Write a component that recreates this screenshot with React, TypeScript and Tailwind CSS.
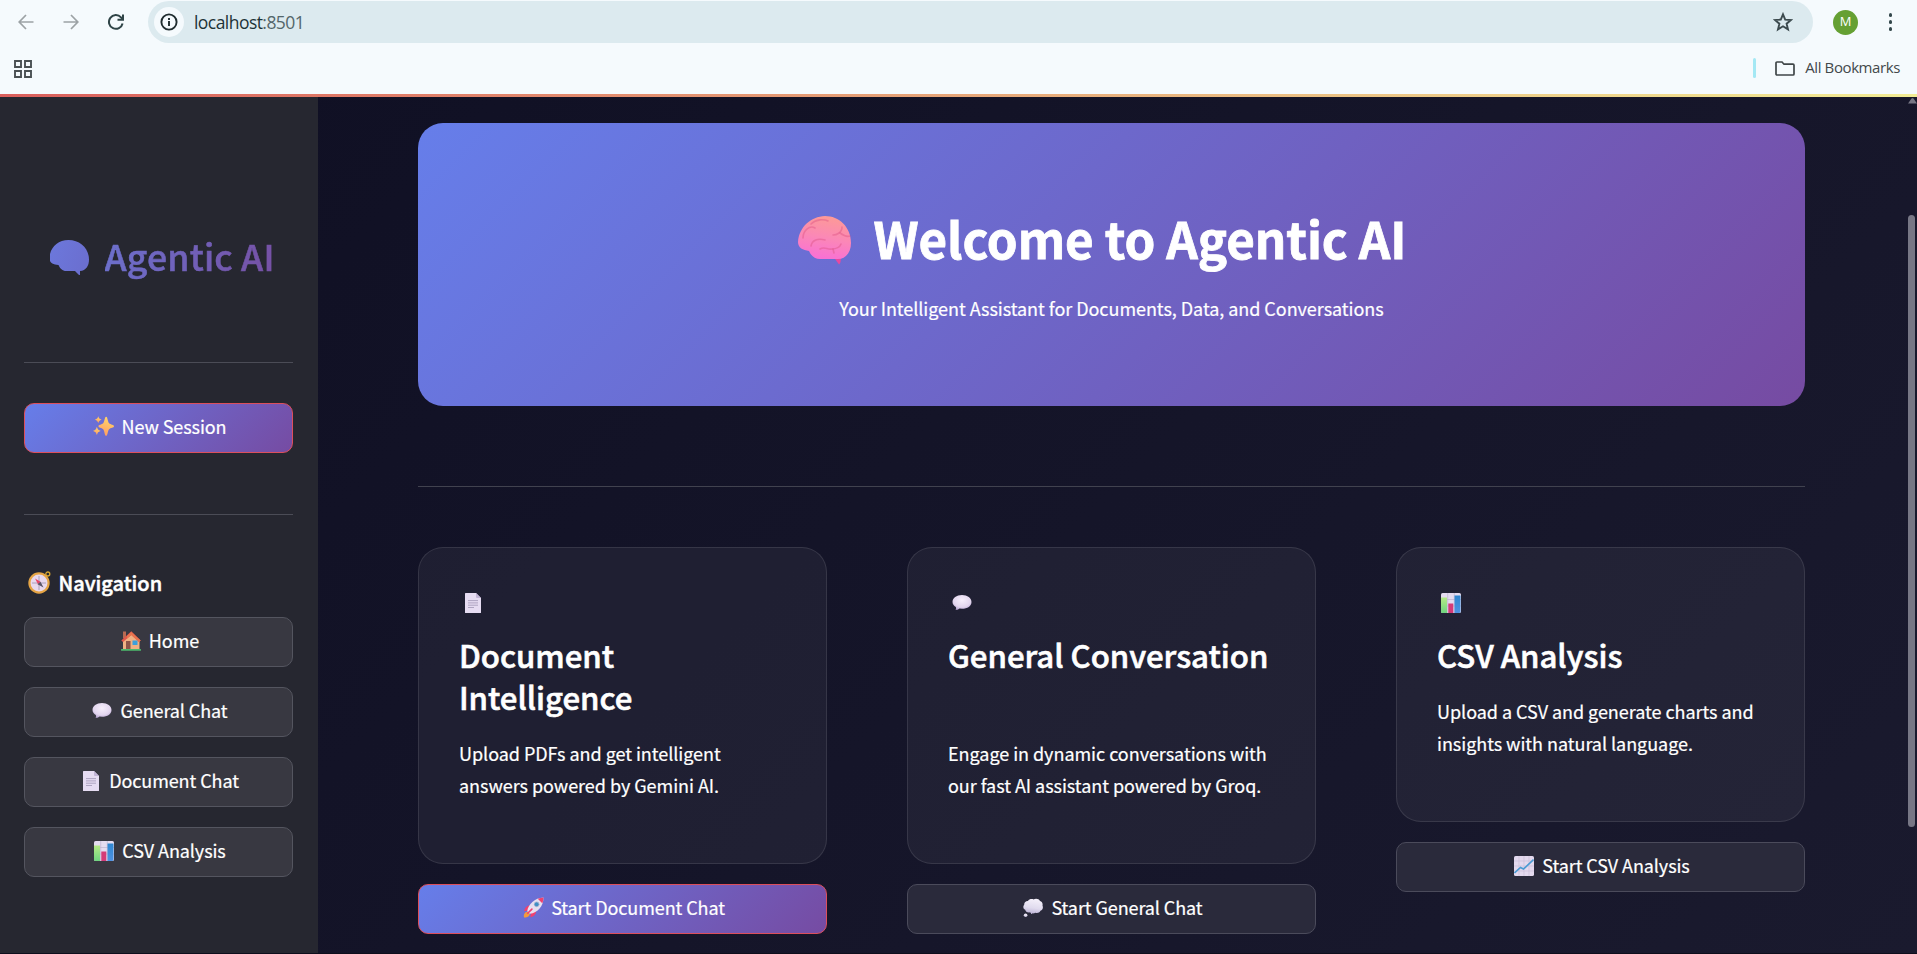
import type { ReactNode } from "react";

const sans = "font-['Noto_Sans_CJK_SC',sans-serif]";
const ui = "font-['Open_Sans',sans-serif]";

type IconProps = { className?: string };

function Brain({ className }: IconProps) {
  return (
    <svg viewBox="0 0 54 49" className={className}>
      <defs>
        <linearGradient id="brainFill" x1="0.6" y1="0" x2="0.4" y2="1">
          <stop offset="0" stopColor="#fd9a96" />
          <stop offset="0.5" stopColor="#fb88b6" />
          <stop offset="1" stopColor="#f96fd6" />
        </linearGradient>
      </defs>
      <path d="M35 40 L41 48.5 C43 47 43 43 42.500 39Z" fill="#e8499f" />
      <path
        d="M27 0 C41 0 53 11 53 27 C53 36 48 43 40 43 H22 C17 43 13 40 11 35 C5 34 0 32 0 26 C1 11 13 0.500 27 0Z"
        fill="url(#brainFill)"
      />
      <g fill="none" stroke="#dd5585" strokeOpacity="0.45" strokeWidth="1.600" strokeLinecap="round">
        <path d="M5 22 C5 14 12 9 17 12" />
        <path d="M13 8 C18 3 26 3 30 5" />
        <path d="M13 30 C14 24 20 22 27 24" />
        <path d="M22 33 C27 30 29 34 34 33 C38 33 42 31 43 28" />
        <path d="M44 11 C44 17 38 19 35 19" />
        <path d="M42 17 C46 20 49 21 52 20" />
        <path d="M35 33 L36 37" />
      </g>
    </svg>
  );
}

function BrainShape({ className }: IconProps) {
  return (
    <svg viewBox="0 0 39 35" className={className}>
      <defs>
        <linearGradient id="brainLogo" x1="0" y1="0" x2="1" y2="0.3">
          <stop offset="0" stopColor="#6c78dc" />
          <stop offset="1" stopColor="#6b6fd0" />
        </linearGradient>
      </defs>
      <path
        d="M18.500 0 C30 0 39 8.500 39 19.500 C39 26 36 30.500 30 31 V34.500 C30 35.400 29 35.200 28.500 34.500 L25 31 H16 C12.500 31 10 28.500 8.500 25 C3.500 24.500 0 22.800 0 20.500 V14 C2 6 9 0 18.500 0Z"
        fill="url(#brainLogo)"
      />
    </svg>
  );
}

function PageIcon() {
  return (
    <svg viewBox="0 0 20 20" className="size-5">
      <path d="M2 0.500 Q2 0 2.500 0 H13 L18 5 V19.500 Q18 20 17.500 20 H2.500 Q2 20 2 19.500Z" fill="#e6dcf2" />
      <path d="M13 0 L18 5 H14 Q13 5 13 4Z" fill="#c2b4d6" />
      <path d="M5 7.600h10M5 9.900h10M5 12.200h10M5 14.500h6" stroke="#a79dbb" strokeWidth="0.9" />
    </svg>
  );
}

function SpeechIcon() {
  return (
    <svg viewBox="0 0 20 20" className="size-5">
      <defs>
        <radialGradient id="speech" cx="0.5" cy="0.35" r="0.65">
          <stop offset="0" stopColor="#f7effc" />
          <stop offset="0.7" stopColor="#e2d5ee" />
          <stop offset="1" stopColor="#b9a6d3" />
        </radialGradient>
      </defs>
      <path
        d="M10 2 C15.500 2 19.500 5 19.500 9 C19.500 13 15.500 15.800 10 15.800 L7.500 15.600 C6 16.800 5 17 3.500 17 C4.300 16 4.200 15 3.800 13.900 C1.800 12.800 0.500 11 0.500 9 C0.500 5 4.500 2 10 2Z"
        fill="url(#speech)"
      />
    </svg>
  );
}

function ThoughtIcon() {
  return (
    <svg viewBox="0 0 20 20" className="size-5">
      <defs>
        <linearGradient id="thought" x1="0.5" y1="0" x2="0.3" y2="1">
          <stop offset="0" stopColor="#f4f0fa" />
          <stop offset="0.6" stopColor="#e0dbee" />
          <stop offset="1" stopColor="#bdb3d6" />
        </linearGradient>
      </defs>
      <g fill="url(#thought)">
        <path d="M5 3 C6 1 9 0.500 10.500 1.500 C13 0 16 1 17 3 C19 3.500 20 5.500 19.500 7.500 C20.500 10 19.500 12 17.500 12.800 C16.500 15 14 15.500 12.500 14.700 C10.500 16 8 15.600 7 14.300 C4.500 15 2.500 13.500 2.200 11.700 C0 10.800 -0.200 8 1.200 6.800 C1 4.500 3 2.800 5 3Z" />
        <circle cx="2.600" cy="17.200" r="1.800" />
      </g>
    </svg>
  );
}

function BarsIcon() {
  return (
    <svg viewBox="0 0 20 20" className="size-5">
      <defs>
        <linearGradient id="barGreen" x1="0" y1="0" x2="0" y2="1">
          <stop offset="0" stopColor="#b6ea86" />
          <stop offset="1" stopColor="#6fd480" />
        </linearGradient>
        <linearGradient id="barBlue" x1="0" y1="0" x2="0" y2="1">
          <stop offset="0" stopColor="#2e87d0" />
          <stop offset="1" stopColor="#4f92e2" />
        </linearGradient>
      </defs>
      <rect width="20" height="20" rx="1.600" fill="#e5dcf0" />
      <path d="M0 6.500h20M0 13h20M6.700 0v20M13.300 0v20" stroke="#bfb3cf" strokeWidth="0.7" />
      <path d="M0 4.500H6V20H1.600Q0 20 0 18.400Z" fill="url(#barGreen)" />
      <rect x="7.300" y="10.500" width="5" height="9.500" fill="#d53a78" />
      <path d="M13.500 2.500H19.500V18.400Q19.500 20 18 20H13.500Z" fill="url(#barBlue)" />
    </svg>
  );
}

function TrendIcon() {
  return (
    <svg viewBox="0 0 20 20" className="size-5">
      <rect width="20" height="20" rx="1.600" fill="#e3d9ee" />
      <path d="M0 5h20M0 10h20M0 15h20M5 0v20M10 0v20M15 0v20" stroke="#cabfd8" strokeWidth="0.7" />
      <path d="M0.500 17 L6.500 11.500 L9.500 13 L19.500 3.500" fill="none" stroke="#4a9bd3" strokeWidth="1.600" />
    </svg>
  );
}

function RocketIcon() {
  return (
    <svg viewBox="0 0 20 20" className="size-[21px]">
      <path d="M1 19.500 C0 17 2 13.500 4.500 14 L6.500 16 C6.500 18.500 3.500 19.800 1 19.500Z" fill="#f59a3c" />
      <path d="M6.500 8 C3.500 8 1.500 10.500 1 13.500 L5 12.800Z" fill="#f0416f" />
      <path d="M12.500 13.500 C12.500 16.500 10 18.500 7 19.300 L7.500 15Z" fill="#f0416f" />
      <path d="M4 13.500 C5 7 11 0.800 19.500 0.500 C19.500 9 14 15 6.500 16Z" fill="#e6dff0" />
      <path d="M14 1.700 C15.800 1 17.500 0.600 19.500 0.500 C19.500 2.600 19 4.400 18.400 6Z" fill="#f0416f" />
      <circle cx="13" cy="7" r="2.300" fill="#3f8fc4" stroke="#a9b6cf" strokeWidth="0.7" />
      <path d="M4.500 15.500 L8.500 11.500" stroke="#f0416f" strokeWidth="1.500" strokeLinecap="round" />
    </svg>
  );
}

function HouseIcon() {
  return (
    <svg viewBox="0 0 20 20" className="size-5">
      <rect x="2" y="0.500" width="3" height="7" fill="#b96a52" />
      <path d="M2 9 L10.500 2 L18.500 9 V18.500 H2Z" fill="#efb183" />
      <path d="M0.300 9.500 L10.300 0.300 L19.700 9.500 L18 11 L10.300 4 L2 11Z" fill="#e2574a" />
      <path d="M10.300 1 L6 5 V7.800 L10.300 4 L18 11 L19.700 9.500Z" fill="#e8744f" />
      <rect x="5" y="10" width="4.500" height="8.500" fill="#8d5548" />
      <rect x="11.500" y="9.500" width="5" height="4.500" fill="#3ca0dc" />
      <rect y="18" width="20" height="1.800" rx="0.6" fill="#4cb96c" />
    </svg>
  );
}

function SparklesIcon() {
  return (
    <svg viewBox="0 0 20 20" className="size-[21px]">
      <defs>
        <linearGradient id="spark" x1="0.7" y1="0" x2="0.4" y2="1">
          <stop offset="0" stopColor="#ffd86a" />
          <stop offset="1" stopColor="#ff9d62" />
        </linearGradient>
      </defs>
      <g fill="url(#spark)">
        <path d="M12.500 0.800 C14 0.800 13.900 5.500 15.300 7 C16.800 8.300 20 8.400 20 9.800 C20 11.200 16.800 11.300 15.300 12.600 C13.900 14.100 14 18.900 12.500 18.900 C11 18.900 11.100 14.100 9.700 12.600 C8.200 11.300 5.200 11.200 5.200 9.800 C5.200 8.400 8.200 8.300 9.700 7 C11.100 5.500 11 0.800 12.500 0.800Z" />
        <path d="M5 0.300 C5.800 2.500 6 2.700 8.200 3.500 C6 4.300 5.800 4.500 5 6.700 C4.200 4.500 4 4.300 1.800 3.500 C4 2.700 4.200 2.500 5 0.300Z" />
        <path d="M3.700 10.300 C4.600 13 4.900 13.300 7.400 14.200 C4.900 15.100 4.600 15.400 3.700 18.200 C2.800 15.400 2.500 15.100 0 14.200 C2.500 13.300 2.800 13 3.700 10.300Z" />
      </g>
    </svg>
  );
}

function CompassIcon() {
  return (
    <svg viewBox="0 0 23 23" className="size-[23px]">
      <circle cx="19.800" cy="3" r="2" fill="none" stroke="#d9a730" strokeWidth="1.300" />
      <circle cx="11" cy="12" r="10.700" fill="#e6a545" />
      <circle cx="11" cy="12" r="8.500" fill="#e8d9ee" />
      <path d="M11 5v14M4 12h14" stroke="#a598b4" strokeWidth="0.9" />
      <path d="M7 7.500 L12.500 10.800 L10 13.200Z" fill="#e8476a" />
      <path d="M15.500 16.500 L9.500 13.300 L12.500 10.800Z" fill="#5a5468" />
    </svg>
  );
}

function EmojiLabel({ icon, children }: { icon: ReactNode; children: ReactNode }) {
  return (
    <span className="flex items-center gap-1 pb-[3px] text-[18px] leading-8 whitespace-nowrap text-white">
      <span className="flex w-[27px] justify-center pr-px">{icon}</span>
      <span className="pb-0.5 tracking-[-0.005em] [-webkit-text-stroke:0.2px_white]">{children}</span>
    </span>
  );
}

function Button({ icon, children, variant = "plain" }: { icon: ReactNode; children: ReactNode; variant?: "plain" | "primary" | "nav" }) {
  const look = {
    primary: "border-[#dc4f5c] bg-[linear-gradient(135deg,#667eea_0%,#764ba2_100%)] bg-origin-border",
    nav: "border-[#54555f] bg-[#383841]",
    plain: "border-[#4b4b5b] bg-[#2a2a3b]",
  }[variant];
  return (
    <button className={`flex h-[50px] w-full shrink-0 items-center justify-center rounded-[10px] border ${look}`}>
      <EmojiLabel icon={icon}>{children}</EmojiLabel>
    </button>
  );
}

function Card({ icon, title, lines, tall, action }: { icon: ReactNode; title: ReactNode; lines: string[]; tall: boolean; action: ReactNode }) {
  return (
    <section className="flex w-[409px] flex-col gap-5">
      <div className={`rounded-[25px] border border-white/10 bg-white/5 pt-[39px] pl-10 ${tall ? "h-[317px]" : "h-[275px]"}`}>
        <div className="flex h-8 w-[27px] items-center justify-center">{icon}</div>
        <h2 className={`mt-[15px] text-[31.2px] leading-[42px] font-medium tracking-[-0.03px] text-white [-webkit-text-stroke:0.6px_white] ${tall ? "h-[84px]" : "h-[42px]"}`}>
          {title}
        </h2>
        <p className="mt-[19px] text-[18px] leading-8 tracking-[-0.04px] whitespace-nowrap text-white [-webkit-text-stroke:0.2px_white]">
          {lines[0]}
          <br />
          {lines[1]}
        </p>
      </div>
      {action}
    </section>
  );
}

function BrowserBar() {
  return (
    <header className={`flex h-[94px] shrink-0 flex-col bg-[#f5fafd] ${ui}`}>
      <div className="flex h-11 items-center">
        <div className="flex w-[148px] items-center">
          <svg viewBox="0 0 16 16" className="ml-[18px] size-4" fill="none" stroke="#9ca2a5" strokeWidth="1.700">
            <path d="M15.500 8H1.500M8 1L1.200 8L8 15" />
          </svg>
          <svg viewBox="0 0 16 16" className="ml-[29px] size-4" fill="none" stroke="#9ca2a5" strokeWidth="1.700">
            <path d="M0.500 8H14.500M8 1L14.800 8L8 15" />
          </svg>
          <svg viewBox="0 0 16 16" className="ml-[29px] size-4" fill="none" stroke="#2f4447" strokeWidth="2">
            <path d="M14.600 9.500A6.900 6.900 0 1 1 13 3.300L14.500 5" />
            <path d="M15 0.500V5.700H9.500" />
          </svg>
        </div>
        <div className="flex h-[42px] w-[1665px] items-center rounded-full bg-[#dceaef]">
          <div className="ml-1.5 flex size-[30px] items-center justify-center rounded-full bg-[#f5fafd]">
            <svg viewBox="0 0 18 18" className="size-[18px]" fill="none" stroke="#1f2c2f" strokeWidth="1.900">
              <circle cx="9" cy="9" r="7.600" />
              <path d="M9 8v5M9 5v1.900" />
            </svg>
          </div>
          <span className="mt-px ml-2.5 text-[17.5px] tracking-[-0.55px] text-[#1d3337]">
            localhost<span className="text-[#53666a]">:8501</span>
          </span>
          <svg viewBox="0 0 20 20" className="mr-5 ml-auto size-5" fill="none" stroke="#3c4a4e" strokeWidth="1.900">
            <path d="M10 2.300L12.200 7.600L18 8L13.600 11.700L15 17.400L10 14.300L5 17.400L6.400 11.700L2 8L7.800 7.600Z" />
          </svg>
        </div>
        <div className="ml-5 flex size-[25px] items-center justify-center rounded-full bg-[#65a033] text-[13px] text-white">M</div>
        <div className="ml-[30.5px] flex w-1 flex-col gap-[3.5px]">
          <i className="size-[3.5px] rounded-full bg-[#33474b]" />
          <i className="size-[3.5px] rounded-full bg-[#33474b]" />
          <i className="size-[3.5px] rounded-full bg-[#33474b]" />
        </div>
      </div>
      <div className="flex h-12 items-center pr-[17px] pl-[13px]">
        <svg viewBox="0 0 18 18" className="ml-[0.5px] mt-px size-[18px]" fill="none" stroke="#4a5053" strokeWidth="1.900">
          <path d="M1 1h6v6H1ZM11 1h6v6h-6ZM1 11h6v6H1ZM11 11h6v6h-6Z" />
        </svg>
        <span className="ml-auto h-5 w-[3px] rounded-full bg-[#a4e8f4]" />
        <svg viewBox="0 0 20 15" className="ml-[19px] h-[15px] w-5" fill="none" stroke="#3f4648" strokeWidth="1.700">
          <path d="M1 2Q1 1 2 1H7L9 3.200H18Q19 3.200 19 4.200V13Q19 14 18 14H2Q1 14 1 13Z" />
        </svg>
        <span className="ml-2.5 pb-0.5 text-[15px] tracking-[-0.4px] whitespace-nowrap text-[#43494b]">All Bookmarks</span>
      </div>
    </header>
  );
}

function Sidebar() {
  return (
    <aside className="flex w-[318px] shrink-0 flex-col bg-[#262730] pr-[25px] pl-6">
      <div className="mt-[136px] flex h-11 pl-[26px]">
        <BrainShape className="mt-[7px] h-[35px] w-[39px] shrink-0" />
        <h1 className="mt-px ml-[15.5px] h-[52px] bg-[linear-gradient(100deg,#6c70cc,#7650a4)] bg-clip-text text-[35.6px] leading-[44px] font-medium tracking-[0.18px] whitespace-nowrap text-transparent [-webkit-text-stroke:0.6px_transparent]">
          Agentic AI
        </h1>
      </div>
      <hr className="mt-[85px] border-[#4b4c56]" />
      <div className="mt-10">
        <Button variant="primary" icon={<SparklesIcon />}>New Session</Button>
      </div>
      <hr className="mt-[61px] border-[#4b4c56]" />
      <h3 className="mt-[51px] flex h-8 items-center text-[20px] leading-8 font-medium text-white">
        <span className="ml-[3.5px]">
          <CompassIcon />
        </span>
        <span className="mt-0.5 ml-2 [-webkit-text-stroke:0.5px_white]">Navigation</span>
      </h3>
      <nav className="mt-[19px] flex flex-col gap-5">
        <Button variant="nav" icon={<HouseIcon />}>Home</Button>
        <Button variant="nav" icon={<SpeechIcon />}>General Chat</Button>
        <Button variant="nav" icon={<PageIcon />}>Document Chat</Button>
        <Button variant="nav" icon={<BarsIcon />}>CSV Analysis</Button>
      </nav>
    </aside>
  );
}

export default function App() {
  return (
    <div className={`relative flex h-[954px] w-[1917px] flex-col overflow-hidden ${sans}`}>
      <BrowserBar />
      <div className="h-[3px] shrink-0 bg-[linear-gradient(90deg,#da5f5c,#f2ec95)]" />
      <div className="flex min-h-0 flex-1 bg-[linear-gradient(135deg,#0f0f23_0%,#1a1a2e_100%)]">
        <Sidebar />
        <main className="flex flex-1 flex-col pr-[112px] pl-[100px]">
          <section className="mt-[26px] flex h-[283px] shrink-0 flex-col items-center rounded-[25px] bg-[linear-gradient(135deg,#667eea_0%,#764ba2_100%)] pt-[84px] text-white">
            <div className="flex h-[60px] pr-[18px]">
              <Brain className="mt-[9px] h-[49px] w-[54px]" />
              <h1 className="mt-px ml-[21px] text-[49.3px] leading-[60px] font-bold tracking-[-0.09px] whitespace-nowrap [-webkit-text-stroke:0.8px_white]">
                Welcome to Agentic AI
              </h1>
            </div>
            <p className="mt-[25px] text-[18px] leading-8 tracking-[-0.045px] [-webkit-text-stroke:0.2px_white]">
              Your Intelligent Assistant for Documents, Data, and Conversations
            </p>
          </section>
          <hr className="mt-20 border-[#41424f]" />
          <div className="mt-[60px] flex items-start gap-20">
            <Card
              tall
              icon={<PageIcon />}
              title={<>Document<br />Intelligence</>}
              lines={["Upload PDFs and get intelligent", "answers powered by Gemini AI."]}
              action={<Button variant="primary" icon={<RocketIcon />}>Start Document Chat</Button>}
            />
            <Card
              tall
              icon={<SpeechIcon />}
              title="General Conversation"
              lines={["Engage in dynamic conversations with", "our fast AI assistant powered by Groq."]}
              action={<Button icon={<ThoughtIcon />}>Start General Chat</Button>}
            />
            <Card
              tall={false}
              icon={<BarsIcon />}
              title="CSV Analysis"
              lines={["Upload a CSV and generate charts and", "insights with natural language."]}
              action={<Button icon={<TrendIcon />}>Start CSV Analysis</Button>}
            />
          </div>
        </main>
      </div>
      <div className="absolute top-[97px] right-0 h-[856px] w-[9px]">
        <svg viewBox="0 0 9 7" className="h-[7px] w-[9px]">
          <path d="M0 6.500L3.500 1.500Q4.500 0.300 5.500 1.500L9 6.500Z" fill="#777785" />
        </svg>
        <div className="mt-[111px] h-[612px] w-[7px] rounded-full bg-[#777785]" />
      </div>
      <div className="absolute inset-x-0 bottom-0 h-px bg-[#0e0e1c]" />
    </div>
  );
}
